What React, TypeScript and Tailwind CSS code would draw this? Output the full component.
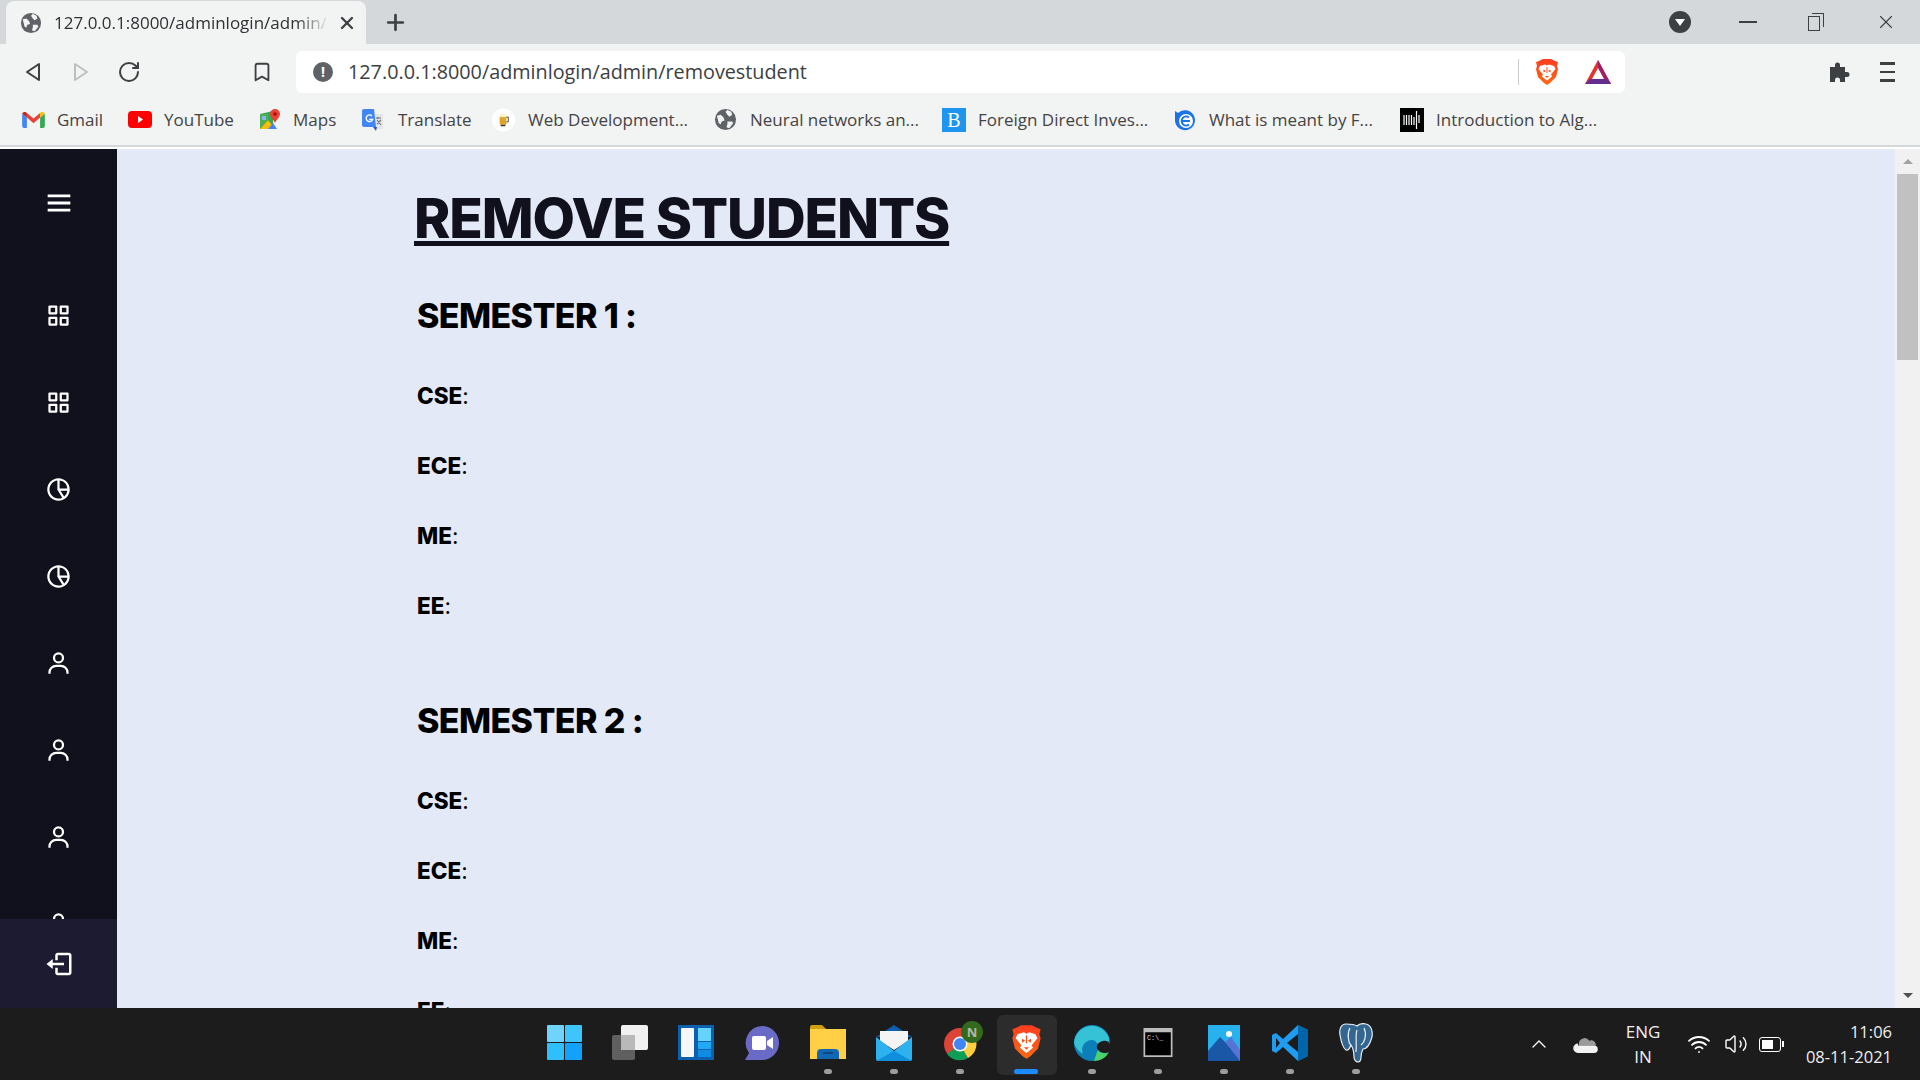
import { BiGridAlt, BiLogOut, BiMenu, BiPieChartAlt2, BiUser } from 'react-icons/bi';
import { Plus, RotateCw, Volume2, Wifi, X, ChevronUp, Bookmark } from 'lucide-react';

function Globe({ className }: { className: string }) {
  return (
    <svg viewBox="0 0 24 24" className={className}>
      <circle cx="12" cy="12" r="11" fill="#5f6368" />
      <path d="M3 8l4-1 3 3 1 3-3 1-1 3-2-1zM14 2l4 2 1 3-3 2-2-2-2-3zM14 14l5 0 1 2-4 5-3-1 1-3z" fill="#f2f3f3" />
    </svg>
  );
}

function BraveLogo({ className }: { className: string }) {
  return (
    <svg viewBox="0 0 24 28" className={className}>
      <defs>
        <linearGradient id="braveFill" x1="0" y1="0" x2="0" y2="1">
          <stop offset="0" stopColor="#ff3d1f" />
          <stop offset="1" stopColor="#fb6a14" />
        </linearGradient>
      </defs>
      <path d="M4 3l4-2h8l4 2 3 1-1 4 1 3-2 8-6 6-3 2-3-2-6-6-2-8 1-3-1-4z" fill="url(#braveFill)" />
      <path d="M5 8l5-1.500 2 1 2-1 5 1.500 1.500 3-4.500 5.500 1 2-3 2.500-2 1.500-2-1.500-3-2.500 1-2-4.500-5.500z" fill="#fff" />
      <path d="M8.500 11.500l2.500 1.500-2.500 1.500zM15.500 11.500l-2.500 1.500 2.500 1.500zM10 18h4l-2 2zM11.500 9h1v6h-1z" fill="#fb4f14" />
    </svg>
  );
}

function GmailIcon() {
  return (
    <svg viewBox="0 0 24 18" className="w-[23px] h-[17px]">
      <path d="M0 3v13a2 2 0 002 2h3V7z" fill="#4285f4" />
      <path d="M24 3v13a2 2 0 01-2 2h-3V7z" fill="#34a853" />
      <path d="M5 7v-5l7 6 7-6v5l-7 6z" fill="#ea4335" />
      <path d="M0 3a3 3 0 015-1v5z" fill="#c5221f" />
      <path d="M24 3a3 3 0 00-5-1v5z" fill="#fbbc04" />
    </svg>
  );
}

function YoutubeIcon() {
  return (
    <svg viewBox="0 0 24 17" className="w-[24px] h-[17px]">
      <rect width="24" height="17" rx="4" fill="#f00" />
      <path d="M10 5l5 3.500-5 3.500z" fill="#fff" />
    </svg>
  );
}

function MapsIcon() {
  return (
    <svg viewBox="0 0 22 24" className="w-[22px] h-[24px]">
      <path d="M1 6l13-3v18H1z" fill="#34a853" />
      <path d="M1 21l8-9 7 9z" fill="#fbbc04" />
      <path d="M1 6h8v6l-8 8z" fill="#4caf50" />
      <path d="M3 8h4v4H3z" fill="#8ab4f8" />
      <path d="M9 21l5-6 4 6z" fill="#4285f4" />
      <path d="M16 1a5 5 0 015 5c0 3-3 5-5 9-2-4-5-6-5-9a5 5 0 015-5z" fill="#ea4335" />
      <circle cx="16" cy="6" r="1.800" fill="#a50e0e" />
    </svg>
  );
}

function TranslateIcon() {
  return (
    <svg viewBox="0 0 22 24" className="w-[22px] h-[24px]">
      <path d="M12 6h9v15h-9z" fill="#e3e5e8" />
      <path d="M14 10h5M16 9v2M15 16l4-4M15 12l4 5" stroke="#777" strokeWidth="1.200" fill="none" />
      <path d="M2 1h10l2 18H2a2 2 0 01-2-2V3a2 2 0 012-2z" fill="#4285f4" />
      <path d="M10 8a3.300 3.300 0 10.600 3.400H7.200" stroke="#fff" strokeWidth="1.400" fill="none" />
      <path d="M11 19l3 4 1-4z" fill="#2a56c6" />
    </svg>
  );
}

function BeerIcon() {
  return (
    <svg viewBox="0 0 24 24" className="w-[23px] h-[24px]">
      <circle cx="12" cy="12" r="12" fill="#fff" />
      <rect x="8" y="7" width="7" height="10" rx="1" fill="#e0a526" />
      <rect x="8" y="6" width="7" height="3" fill="#fff3c4" />
      <path d="M15 9h2v5h-2" stroke="#444" fill="none" />
      <rect x="9" y="17" width="5" height="1.500" fill="#333" />
    </svg>
  );
}

function BlogIcon() {
  return (
    <svg viewBox="0 0 24 24" className="w-[24px] h-[24px]">
      <rect width="24" height="24" fill="#1e96f0" />
      <text x="12" y="19" textAnchor="middle" fontFamily="Liberation Serif, serif" fontSize="20" fill="#fff">B</text>
    </svg>
  );
}

function EduIcon() {
  return (
    <svg viewBox="0 0 24 24" className="w-[24px] h-[24px]">
      <path d="M2 3l3 2a10 10 0 1 1-3 8z" fill="#1a73e8" />
      <circle cx="13" cy="13" r="7" fill="#fff" />
      <path d="M9 13h8M16 9.500a4.500 4.500 0 100 7" stroke="#1a73e8" strokeWidth="2" fill="none" />
    </svg>
  );
}

function WaveIcon() {
  return (
    <svg viewBox="0 0 24 24" className="w-[24px] h-[24px]">
      <rect width="24" height="24" fill="#000" />
      <path d="M4 7v10M6.500 7v10M9 7v10M11.500 7v10M14 9v8M16.500 3v18M19 7v8" stroke="#fff" strokeWidth="1.200" />
    </svg>
  );
}

const bookmarks = [
  { label: 'Gmail', icon: <GmailIcon />, box: 'w-[35px]', text: 'w-[71px]' },
  { label: 'YouTube', icon: <YoutubeIcon />, box: 'w-[36px]', text: 'w-[95px]' },
  { label: 'Maps', icon: <MapsIcon />, box: 'w-[34px]', text: 'w-[69px]' },
  { label: 'Translate', icon: <TranslateIcon />, box: 'w-[36px]', text: 'w-[94px]' },
  { label: 'Web Development...', icon: <BeerIcon />, box: 'w-[36px]', text: 'w-[186px]' },
  { label: 'Neural networks an...', icon: <Globe className="w-[23px] h-[23px]" />, box: 'w-[36px]', text: 'w-[192px]' },
  { label: 'Foreign Direct Inves...', icon: <BlogIcon />, box: 'w-[36px]', text: 'w-[195px]' },
  { label: 'What is meant by F...', icon: <EduIcon />, box: 'w-[36px]', text: 'w-[191px]' },
  { label: 'Introduction to Alg...', icon: <WaveIcon />, box: 'w-[36px]', text: 'w-[170px]' },
];

function BrowserChrome() {
  return (
    <div className="shrink-0 h-[149px] font-['Open_Sans',sans-serif] text-[#3c4043]">
      <div className="h-[44px] bg-[#d5d8db] flex items-end pl-[6px]">
        <div className="w-[360px] h-[43px] bg-[#f2f3f3] rounded-t-[8px] flex items-center pl-[14px] pr-[9px]">
          <Globe className="w-[22px] h-[22px] shrink-0" />
          <div className="ml-[12px] w-[276px] overflow-hidden whitespace-nowrap text-[17px] text-[#2f3134] [mask-image:linear-gradient(to_right,#000_88%,transparent)]">
            127.0.0.1:8000/adminlogin/admin/removestudent
          </div>
          <X className="ml-[8px] w-[20px] h-[20px] text-[#3c4043]" strokeWidth={2.800} />
        </div>
        <div className="h-[44px] flex items-center ml-[17px]">
          <Plus className="w-[25px] h-[25px] text-[#3c4043]" strokeWidth={2.600} />
        </div>
        <div className="ml-auto h-[44px] flex items-center">
          <div className="w-[22px] h-[22px] rounded-full bg-[#3c4043] flex items-center justify-center">
            <div className="w-0 h-0 border-x-[5px] border-x-transparent border-t-[7px] border-t-white" />
          </div>
          <div className="ml-[48px] w-[18px] h-[1.500px] bg-[#3c4043]" />
          <div className="ml-[51px] w-[16px] h-[18px] relative">
            <div className="absolute left-0 bottom-0 w-[12px] h-[15px] border-[1.500px] border-[#3c4043]" />
            <div className="absolute top-0 right-0 w-[12px] h-[14px] border-t-[1.500px] border-r-[1.500px] border-[#3c4043]" />
          </div>
          <div className="ml-[51px] mr-[23px] w-[22px] flex justify-center"><X className="w-[24px] h-[24px]" strokeWidth={1.200} /></div>
        </div>
      </div>

      <div className="h-[52px] bg-[#f2f3f3] flex items-center pl-[9px] pt-[4px]">
        <div className="w-[48px] flex justify-center">
          <svg viewBox="0 0 16 20" className="w-[16px] h-[20px]"><path d="M14 2v16L2 10z" fill="none" stroke="#3c4043" strokeWidth="2" strokeLinejoin="round" /></svg>
        </div>
        <div className="w-[48px] flex justify-center">
          <svg viewBox="0 0 16 20" className="w-[16px] h-[20px]"><path d="M2 2v16l12-8z" fill="none" stroke="#bdbfc1" strokeWidth="2" strokeLinejoin="round" /></svg>
        </div>
        <div className="w-[48px] flex justify-center">
          <RotateCw className="w-[24px] h-[24px] text-[#3c4043]" strokeWidth={2} />
        </div>
        <div className="ml-[97px] w-[24px] flex justify-center">
          <Bookmark className="w-[22px] h-[24px] text-[#3c4043]" strokeWidth={2} />
        </div>
        <div className="ml-[22px] w-[1329px] h-[42px] bg-white rounded-[6px] flex items-center pl-[17px] pr-[13px]">
          <div className="w-[20px] h-[20px] rounded-full bg-[#5f6368] text-white text-[14px] font-bold leading-[20px] text-center">!</div>
          <span className="ml-[15px] text-[19.800px] text-[#3c4043] leading-none">127.0.0.1:8000/adminlogin/admin/removestudent</span>
          <div className="ml-auto w-px h-[26px] bg-[#ccc]" />
          <BraveLogo className="ml-[16px] w-[24px] h-[28px]" />
          <svg viewBox="0 0 28 26" className="ml-[25px] w-[28px] h-[26px]">
            <path d="M14 1L1 25h26z" fill="#e2342c" />
            <path d="M14 1l13 24H14z" fill="#9e1f63" />
            <path d="M1 25l5-5h16l5 5z" fill="#662d91" />
            <path d="M14 9l-6 11h12z" fill="#fff" />
          </svg>
        </div>
        <div className="ml-[202px] w-[24px] flex justify-center">
          <svg viewBox="0 0 24 24" className="w-[24px] h-[24px]"><path d="M3 7h5V5a2.500 2.500 0 015 0v2h5v5h2a2.500 2.500 0 010 5h-2v5h-5v-2a2.500 2.500 0 00-5 0v2H3z" fill="#3c4043" /></svg>
        </div>
        <div className="ml-[29px] flex flex-col gap-[6px] w-[15px]">
          <div className="h-[2.500px] bg-[#3c4043]" />
          <div className="h-[2.500px] bg-[#3c4043]" />
          <div className="h-[2.500px] bg-[#3c4043]" />
        </div>
      </div>

      <div className="h-[51px] bg-[#f2f3f3] border-b-2 border-[#d5d8db] flex items-center pl-[22px] pb-[2px] text-[17px] text-[#444]">
        {bookmarks.map((b) => (
          <div key={b.label} className="flex items-center">
            <div className={b.box}>{b.icon}</div>
            <div className={`${b.text} whitespace-nowrap`}>{b.label}</div>
          </div>
        ))}
      </div>
    </div>
  );
}

const navIcons = [BiGridAlt, BiGridAlt, BiPieChartAlt2, BiPieChartAlt2, BiUser, BiUser, BiUser, BiUser];

function Sidebar() {
  return (
    <aside className="w-[117px] shrink-0 bg-[#11101d] flex flex-col text-white">
      <div className="flex-1 min-h-0 overflow-hidden">
        <div className="h-[108px] flex items-center justify-center">
          <BiMenu className="w-[34px] h-[34px]" />
        </div>
        <div className="h-[15px]" />
        <ul className="flex flex-col">
          {navIcons.map((Icon, i) => (
            <li key={i} className="h-[87px] flex items-center justify-center">
              <Icon className="w-[27px] h-[27px]" />
            </li>
          ))}
        </ul>
      </div>
      <div className="h-[89px] bg-[#1d1b31] flex items-center justify-center">
        <BiLogOut className="w-[30px] h-[30px]" />
      </div>
    </aside>
  );
}

const branches = ['CSE', 'ECE', 'ME', 'EE'];

function Semester({ n, className }: { n: number; className: string }) {
  return (
    <section className={className}>
      <h2 className="h-[50px] leading-[50px] text-[34px] font-extrabold tracking-[-0.600px] text-black">SEMESTER {n} :</h2>
      <div className="mt-[20px]">
        {branches.map((b) => (
          <p key={b} className="h-[70px] leading-[70px] text-[22.500px] text-black">
            <b className="font-extrabold">{b}</b>:
          </p>
        ))}
      </div>
    </section>
  );
}

function Main() {
  return (
    <main className="flex-1 min-w-0 bg-[#e4e9f7] overflow-hidden font-['Inter',sans-serif]">
      <div className="pl-[300px] pt-[29px]">
        <h1 className="h-[80px] leading-[80px] text-[55px] font-extrabold tracking-[-1.150px] text-[#11101d] underline decoration-[5px] underline-offset-[3px] -ml-[3px] whitespace-nowrap">
          REMOVE STUDENTS
        </h1>
        <Semester n={1} className="mt-[33px]" />
        <Semester n={2} className="mt-[55px]" />
      </div>
    </main>
  );
}

function Scrollbar() {
  return (
    <div className="w-[25px] shrink-0 bg-[#f1f1f1] flex flex-col items-center">
      <div className="h-[25px] flex items-center justify-center">
        <div className="w-0 h-0 border-x-[5px] border-x-transparent border-b-[5px] border-b-[#a3a3a3]" />
      </div>
      <div className="w-[21px] h-[186px] bg-[#c1c1c1]" />
      <div className="flex-1" />
      <div className="h-[25px] flex items-center justify-center">
        <div className="w-0 h-0 border-x-[5px] border-x-transparent border-t-[5px] border-t-[#505050]" />
      </div>
    </div>
  );
}

function TaskIcon({ children, dot, active }: { children: React.ReactNode; dot?: boolean; active?: boolean }) {
  return (
    <div className="w-[66px] h-[72px] relative flex items-center justify-center pb-[3px]">
      {active && <div className="absolute left-[4px] top-[7px] w-[60px] h-[60px] rounded-[6px] bg-[#2c2c2c]" />}
      <div className="relative flex">{children}</div>
      {dot && <div className="absolute bottom-[6px] left-[29px] w-[8px] h-[5px] rounded-full bg-[#9d9d9d]" />}
      {active && <div className="absolute bottom-[6px] left-[21px] w-[24px] h-[5px] rounded-full bg-[#1a8cff]" />}
    </div>
  );
}

function Taskbar() {
  return (
    <footer className="h-[72px] shrink-0 bg-[#1c1c1c] flex items-center pl-[531px] text-white font-['Open_Sans',sans-serif]">
      <TaskIcon>
        <svg viewBox="0 0 35 35" className="w-[35px] h-[35px]">
          <rect width="17" height="17" rx="1" fill="#6fd3fb" />
          <rect x="18" width="17" height="17" rx="1" fill="#3ec6fc" />
          <rect y="18" width="17" height="17" rx="1" fill="#2fc0fb" />
          <rect x="18" y="18" width="17" height="17" rx="1" fill="#12a1fb" />
        </svg>
      </TaskIcon>
      <TaskIcon>
        <svg viewBox="0 0 36 36" className="w-[36px] h-[36px]">
          <rect x="0" y="10" width="23" height="25" rx="2" fill="#5f5f5f" />
          <rect x="9" y="0" width="27" height="25" rx="2" fill="#f0f0f0" />
          <rect x="9" y="10" width="14" height="15" fill="#b9b9b9" />
        </svg>
      </TaskIcon>
      <TaskIcon>
        <svg viewBox="0 0 36 36" className="w-[36px] h-[36px]">
          <rect width="36" height="35" fill="#0d5fb0" />
          <rect x="3" y="3" width="13" height="29" rx="1" fill="#f7f7f7" />
          <rect x="20" y="3" width="13" height="13" fill="#66d3fd" />
          <rect x="20" y="17" width="13" height="7" fill="#20a9f5" />
          <rect x="20" y="25" width="13" height="7" fill="#0f8de0" />
        </svg>
      </TaskIcon>
      <TaskIcon>
        <svg viewBox="0 0 36 36" className="w-[36px] h-[36px]">
          <path d="M18 1a17 17 0 110 34H1l4-7A17 17 0 0118 1z" fill="#6a6bc6" />
          <rect x="8" y="11" width="14" height="14" rx="2" fill="#fff" />
          <path d="M23 16l6-4v12l-6-4z" fill="#fff" />
        </svg>
      </TaskIcon>
      <TaskIcon dot>
        <svg viewBox="0 0 36 36" className="w-[36px] h-[36px]">
          <path d="M0 2a2 2 0 012-2h10l4 4H0z" fill="#d19e12" />
          <path d="M0 4h36v30H0z" fill="#ffcf45" />
          <path d="M7 28a4 4 0 014-4h14a4 4 0 014 4v6H7z" fill="#1068b5" />
          <path d="M13 28h10" stroke="#0a3f73" strokeWidth="1.500" />
        </svg>
      </TaskIcon>
      <TaskIcon dot>
        <svg viewBox="0 0 36 36" className="w-[36px] h-[36px]">
          <path d="M18 0l18 12H0z" fill="#0a5fb0" />
          <path d="M4 6h28v10l-14 9-14-9z" fill="#f4f4f4" />
          <path d="M0 12l18 14 18-14v22a2 2 0 01-2 2H2a2 2 0 01-2-2z" fill="#2eb2ef" />
          <path d="M0 36l18-10 18 10z" fill="#0f8fdc" />
        </svg>
      </TaskIcon>
      <TaskIcon dot>
        <svg viewBox="0 0 40 40" className="w-[40px] h-[40px] ml-[6px] -mt-[4px]">
          <circle cx="17" cy="23" r="16" fill="#db4437" />
          <path d="M17 23L4 33a16 16 0 0021 4z" fill="#0f9d58" />
          <path d="M17 23l8 14a16 16 0 005-24z" fill="#ffcd40" />
          <circle cx="17" cy="23" r="7.500" fill="#fff" />
          <circle cx="17" cy="23" r="6" fill="#4285f4" />
          <circle cx="29" cy="11" r="11" fill="#33691e" />
          <text x="29" y="15.500" textAnchor="middle" fontSize="13" fontWeight="700" fontFamily="Open Sans, sans-serif" fill="#b7b7a4">N</text>
        </svg>
      </TaskIcon>
      <TaskIcon active>
        <BraveLogo className="w-[31px] h-[36px] -mt-[2px]" />
      </TaskIcon>
      <TaskIcon dot>
        <svg viewBox="0 0 36 36" className="w-[36px] h-[36px]">
          <circle cx="18" cy="18" r="18" fill="#0c7fb8" />
          <path d="M0 18a18 18 0 0135-5c1 5-3 7-7 7-6 0-5-5-10-5-7 0-12 7-9 14a18 18 0 01-9-11z" fill="#35c1d6" />
          <path d="M36 19c-1-3-5-4-7-3-5 1-8 5-5 9 2 3 8 4 11 2 1-3 1-5 1-8z" fill="#1c1c1c" />
          <path d="M24 25c3 4 8 4 11 2-3 6-9 9-15 9 1-3 2-7 4-11z" fill="#49d36c" />
        </svg>
      </TaskIcon>
      <TaskIcon dot>
        <svg viewBox="0 0 34 34" className="w-[34px] h-[29px]">
          <rect width="34" height="34" fill="#bdbdbd" />
          <rect x="2" y="5" width="30" height="27" fill="#000" />
          <text x="4" y="14" fontSize="8" fontFamily="Liberation Mono, monospace" fill="#ddd">C:\_</text>
        </svg>
      </TaskIcon>
      <TaskIcon dot>
        <svg viewBox="0 0 32 36" className="w-[32px] h-[36px]">
          <rect width="32" height="36" fill="#27b2ef" />
          <circle cx="21" cy="9" r="3" fill="#fff" />
          <path d="M0 26l12-14 20 20v4H0z" fill="#1b57a7" />
          <path d="M17 17l6-5 9 13v11z" fill="#5674d6" />
        </svg>
      </TaskIcon>
      <TaskIcon dot>
        <svg viewBox="0 0 36 36" className="w-[36px] h-[36px]">
          <path d="M26 0l10 5v26l-10 5-15-14-7 6-4-2V10l4-2 7 6z" fill="#1f9cf0" />
          <path d="M26 0l10 5v26l-10 5z" fill="#0065a9" />
          <path d="M26 9L15 18l11 9z" fill="#1c1c1c" />
          <path d="M4 13l4 5-4 5z" fill="#1c1c1c" />
        </svg>
      </TaskIcon>
      <TaskIcon dot>
        <svg viewBox="0 0 36 40" className="w-[36px] h-[40px]">
          <path d="M8 1C3 1 1 6 2 12c1 6 3 13 6 15 3 1 4-3 5-5 2 3 3 8 3 12 0 3 2 5 4 5s3-2 3-5c0-3 1-6 2-8 4 0 7-5 9-12 1-6-1-12-6-13-4-1-7 0-9 2-3-2-7-2-11-2z" fill="#336791" stroke="#e8eef3" strokeWidth="1.200" />
          <path d="M12 5c-3 5-2 14 1 18M26 5c3 6 1 14-3 17M19 7c-2 6 0 12-1 22" fill="none" stroke="#e8eef3" strokeWidth="1.200" />
        </svg>
      </TaskIcon>
      <div className="ml-[138px] flex items-center">
        <ChevronUp className="w-[24px] h-[24px]" strokeWidth={1.300} />
        <svg viewBox="0 0 26 18" className="ml-[22px] w-[25px] h-[17px]">
          <path d="M6 8a6 6 0 0111-3 5 5 0 017 5H6z" fill="#9a9a9a" />
          <path d="M5 8a5 5 0 000 10h17a4 4 0 000-8H5z" fill="#f3f3f3" />
        </svg>
        <div className="ml-[27px] w-[36px] flex flex-col items-center text-[17px] leading-[25px] text-[#eee] pb-[1px]">
          <span>ENG</span>
          <span>IN</span>
        </div>
        <Wifi className="ml-[26px] w-[24px] h-[24px]" strokeWidth={1.800} />
        <Volume2 className="ml-[13px] w-[24px] h-[24px]" strokeWidth={1.400} />
        <div className="ml-[11px] w-[22px] h-[15px] border-[1.500px] border-white rounded-[3px] p-[2px] relative">
          <div className="w-[11px] h-full bg-white" />
          <div className="absolute -right-[4px] top-[3px] w-[2px] h-[6px] bg-white" />
        </div>
        <div className="ml-[26px] w-[85px] flex flex-col items-end text-[16.500px] leading-[25px] text-[#eee] whitespace-nowrap">
          <span>11:06</span>
          <span>08-11-2021</span>
        </div>
      </div>
    </footer>
  );
}

export default function App() {
  return (
    <div className="w-screen h-screen overflow-hidden flex flex-col">
      <BrowserChrome />
      <div className="flex-1 min-h-0 flex">
        <Sidebar />
        <Main />
        <Scrollbar />
      </div>
      <Taskbar />
    </div>
  );
}
